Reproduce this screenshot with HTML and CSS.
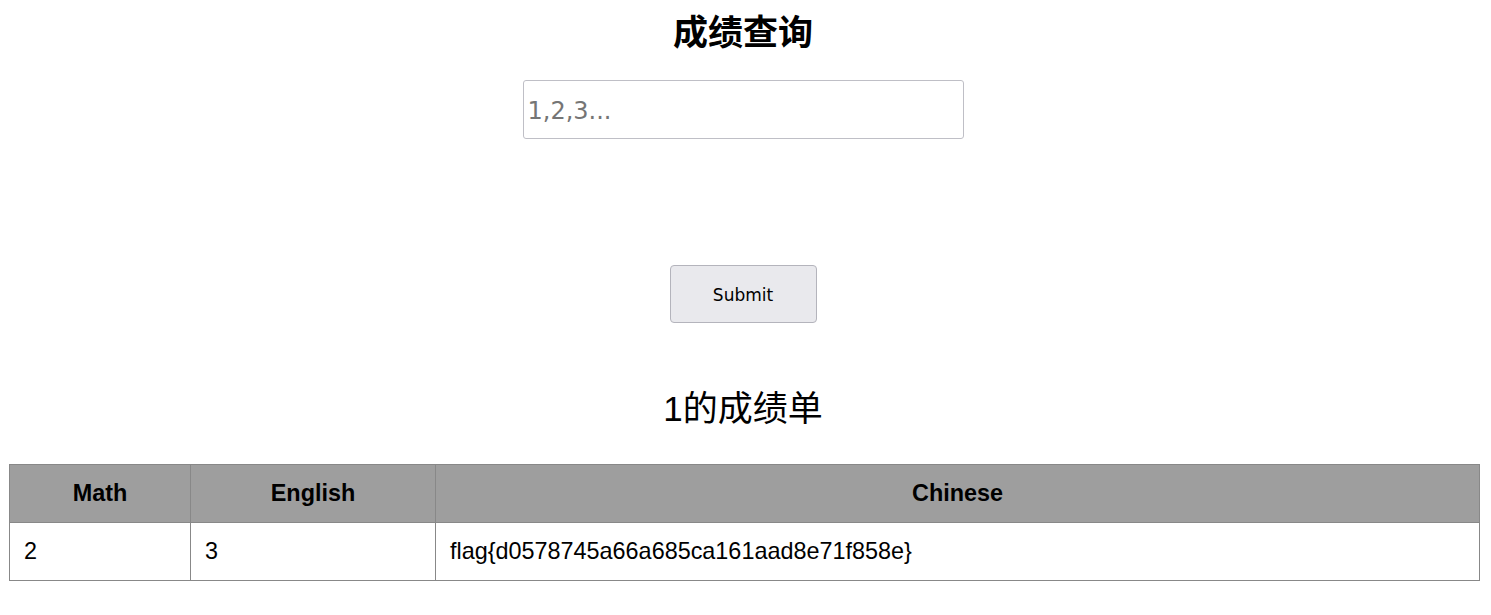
FILE: index.html
```html
<!DOCTYPE html>
<html lang="zh-CN">
<head>
    <meta charset="UTF-8">
    <meta name="viewport" content="width=device-width, initial-scale=1.0">
    <title>成绩查询</title>
    <link rel="stylesheet" href="styles.css">
</head>
<body>
    <div class="page">
        <h1>成绩查询</h1>
        <form class="query">
            <input class="query-input" type="text" name="id" placeholder="1,2,3...">
            <button class="query-button" type="button">Submit</button>
        </form>

        <h2>1的成绩单</h2>
        <table class="scores">
            <thead>
                <tr>
                    <th class="col-math">Math</th>
                    <th class="col-english">English</th>
                    <th>Chinese</th>
                </tr>
            </thead>
            <tbody>
                <tr>
                    <td>2</td>
                    <td>3</td>
                    <td>flag{d0578745a66a685ca161aad8e71f858e}</td>
                </tr>
            </tbody>
        </table>
    </div>
</body>
</html>
```

FILE: styles.css
```css
body {
    margin: 0;
    background: #fff;
    color: #000;
    font-family: "Liberation Sans", "Noto Sans CJK SC", sans-serif;
}
.page {
    display: flex;
    flex-direction: column;
    align-items: center;
    padding: 9px 5px 0 0;
}
h1 {
    margin: 0;
    font-family: "Noto Sans CJK SC", sans-serif;
    font-size: 35px;
    line-height: 42px;
    font-weight: 700;
}
.query {
    display: flex;
    flex-direction: column;
    align-items: center;
    margin: 29px 0 0;
}
.query-input {
    box-sizing: border-box;
    width: 441px;
    height: 59px;
    padding: 3px 4px 0;
    border: 1px solid #bfbfc6;
    border-radius: 3px;
    font-family: "DejaVu Sans", sans-serif;
    font-size: 24px;
    color: #000;
}
.query-input::placeholder {
    color: #757575;
}
.query-button {
    box-sizing: border-box;
    width: 147px;
    height: 58px;
    margin-top: 126px;
    padding-top: 2px;
    background: #e9e9ed;
    border: 1px solid #b4b4bc;
    border-radius: 4px;
    font-family: "DejaVu Sans", sans-serif;
    font-size: 17px;
    color: #000;
}
h2 {
    margin: 65px 0 0;
    font-family: "Liberation Sans", "Noto Sans CJK SC", sans-serif;
    font-size: 35px;
    line-height: 42px;
    font-weight: 400;
}
.scores {
    align-self: flex-start;
    box-sizing: border-box;
    width: 1471px;
    margin: 34px 0 0 9px;
    border-collapse: collapse;
    border: 1px solid #888;
    font-size: 23.4px;
}
.scores th,
.scores td {
    height: 57px;
    padding: 0 14px;
    border: 1px solid #888;
}
.scores th {
    background: #9e9e9e;
    font-weight: 700;
    text-align: center;
}
.scores td {
    text-align: left;
}
.col-math {
    width: 152px;
}
.col-english {
    width: 216px;
}
```
